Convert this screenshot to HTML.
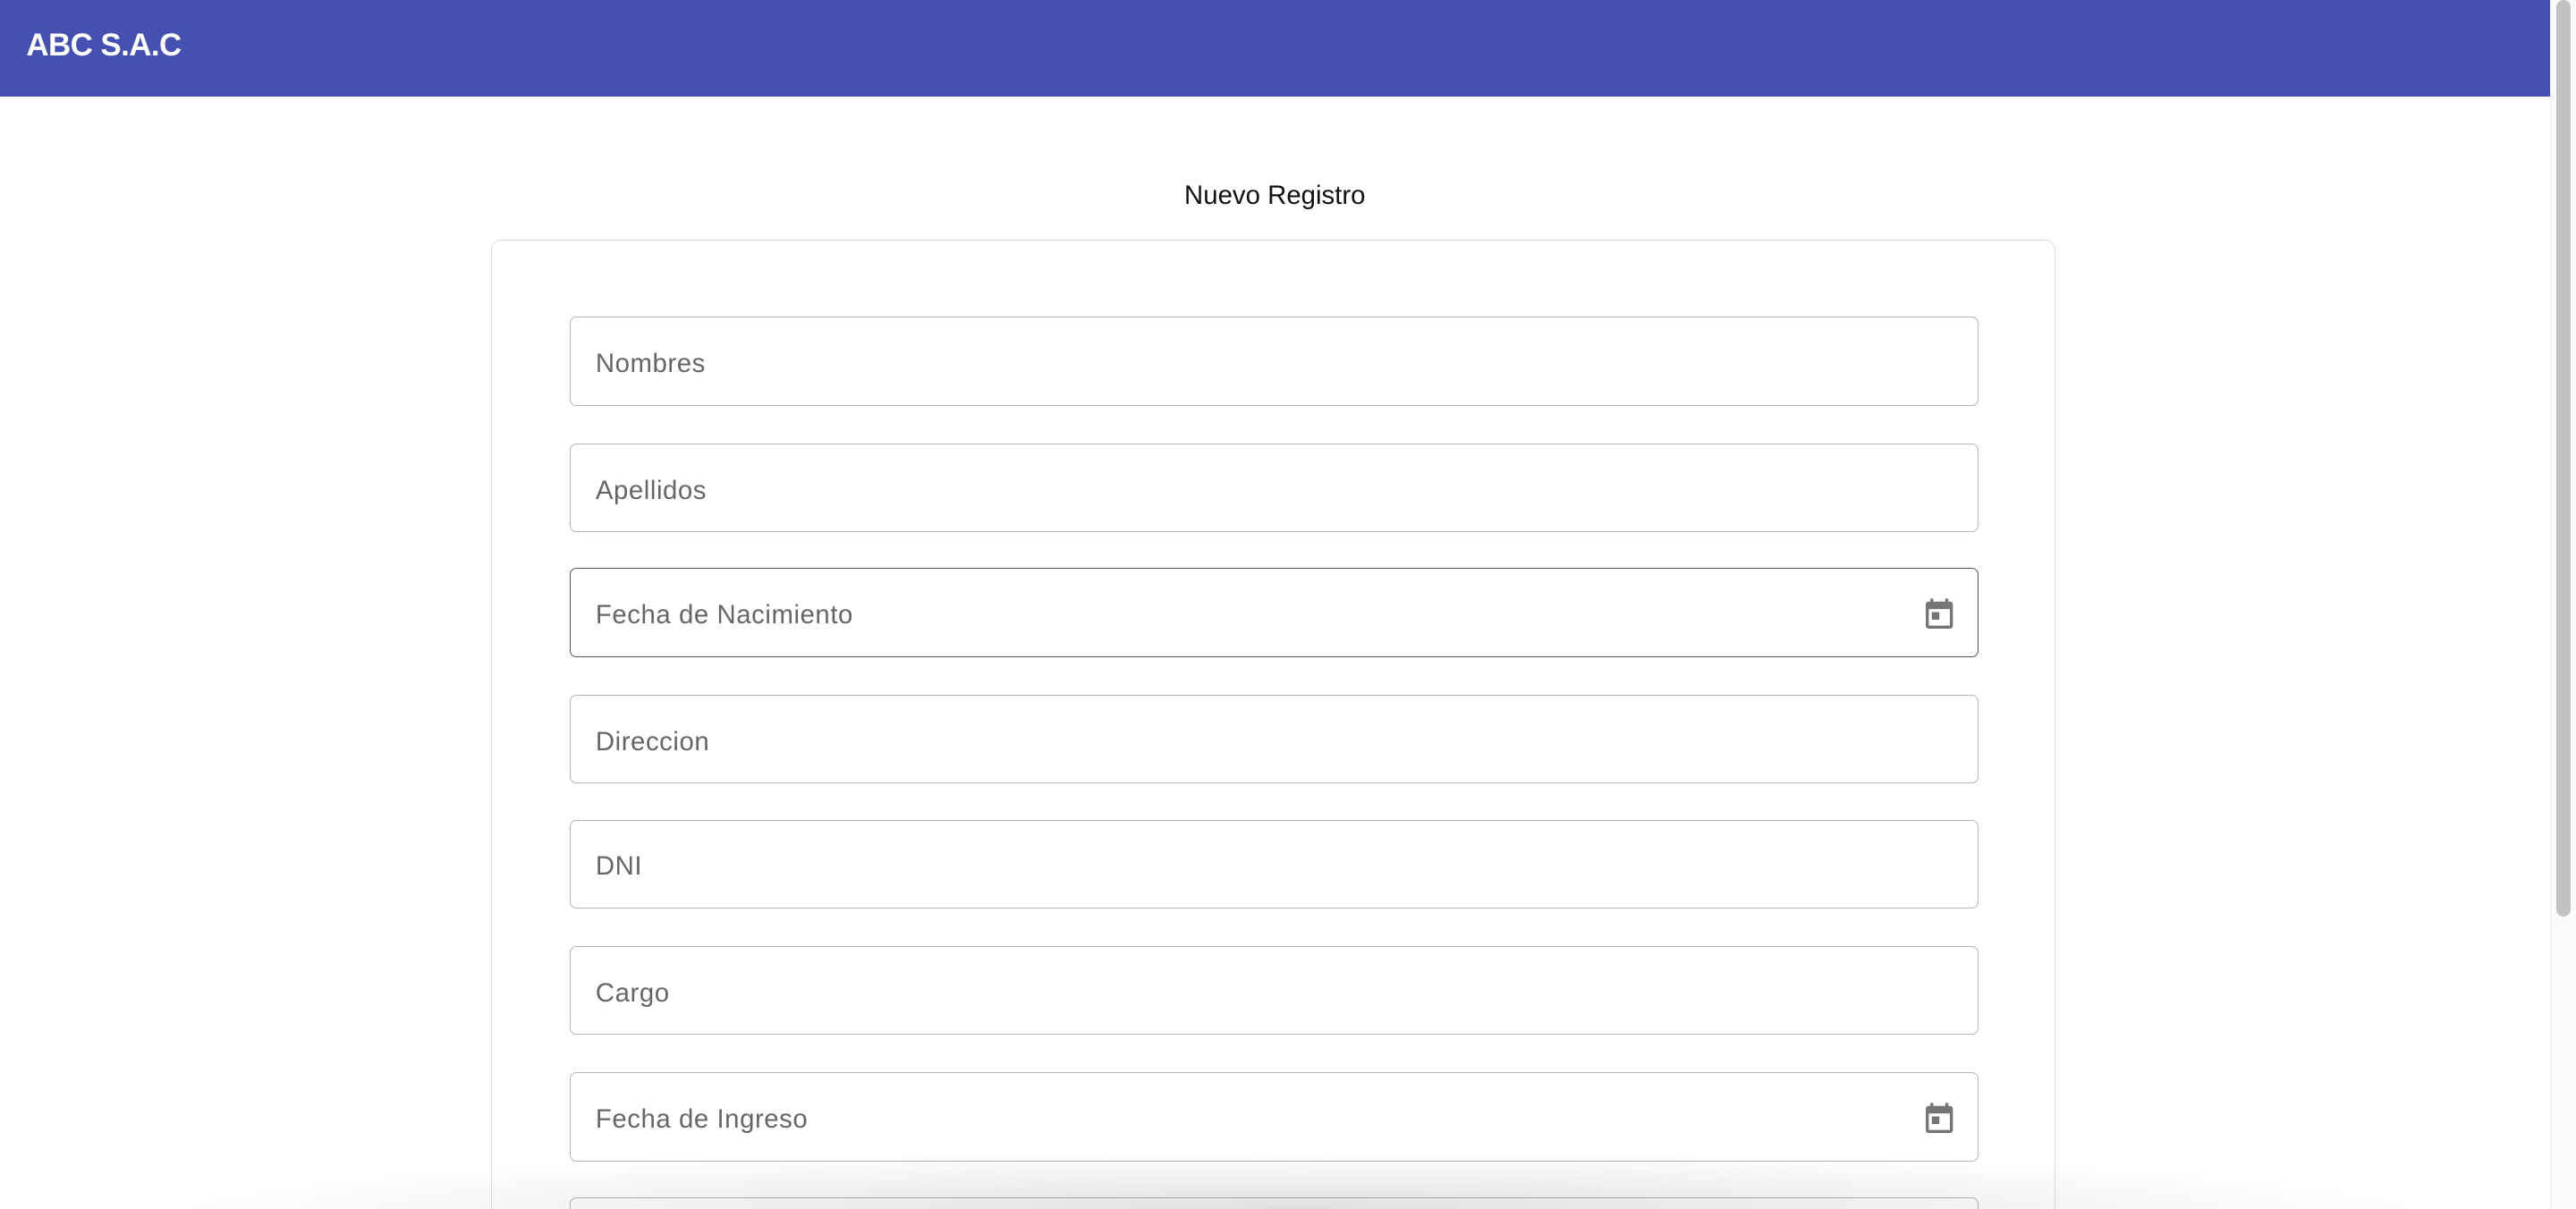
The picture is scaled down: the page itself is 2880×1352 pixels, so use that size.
<!DOCTYPE html>
<html><head><meta charset="utf-8"><style>
html,body{margin:0;padding:0;width:2880px;height:1352px;overflow:hidden;background:#fff;font-family:"Liberation Sans",Roboto,sans-serif}
#w{zoom:1.8367;width:1568px;height:736px;position:relative;overflow:hidden}
.hdr{position:absolute;left:0;top:0;width:1552px;height:59px;background:#4550b1}
.hdr span{position:absolute;left:16px;top:17px;color:#fff;font-weight:bold;font-size:19px;letter-spacing:-0.3px}
.title{position:absolute;left:0;width:1552px;top:110px;text-align:center;font-size:16px;color:#111}
.card{position:absolute;left:299px;top:146px;width:951px;height:600px;border:1px solid #dcdcdc;border-radius:6px}
.f{position:absolute;left:347px;width:856px;height:53px;border:1px solid #b5b5b5;border-radius:4px;background:#fff}
.f span{position:absolute;left:15px;top:19px;font-size:16px;color:#666;letter-spacing:0.3px}
.f svg{position:absolute;right:12px;top:16px}
.sb{position:absolute;left:1552px;top:0;width:16px;height:736px;background:#fafafa;border-left:1px solid #ececec}
.th{position:absolute;left:1556px;top:0;width:9px;height:558px;background:#c1c1c1;border-radius:5px}
.sh{position:absolute;left:100px;top:700px;width:1380px;height:36px;background:radial-gradient(ellipse 50% 100% at 50% 100%,rgba(0,0,0,.12),rgba(0,0,0,0))}
</style></head><body><div id="w">
<div class="hdr"><span>ABC S.A.C</span></div>
<div class="title">Nuevo Registro</div>
<div class="card"></div>
<div class="f" style="top:193px"><span>Nombres</span></div>
<div class="f" style="top:270px"><span>Apellidos</span></div>
<div class="f" style="top:346px;border-color:#555"><span>Fecha de Nacimiento</span><svg width="22" height="22" viewBox="0 0 24 24"><path fill="#757575" d="M19 4h-1V2h-2v2H8V2H6v2H5c-1.1 0-2 .9-2 2v14c0 1.1.9 2 2 2h14c1.1 0 2-.9 2-2V6c0-1.1-.9-2-2-2zm0 16H5V9h14v11zM7 11h5v5H7z"/></svg></div>
<div class="f" style="top:423px"><span>Direccion</span></div>
<div class="f" style="top:499px"><span>DNI</span></div>
<div class="f" style="top:576px"><span>Cargo</span></div>
<div class="f" style="top:653px"><span>Fecha de Ingreso</span><svg width="22" height="22" viewBox="0 0 24 24"><path fill="#757575" d="M19 4h-1V2h-2v2H8V2H6v2H5c-1.1 0-2 .9-2 2v14c0 1.1.9 2 2 2h14c1.1 0 2-.9 2-2V6c0-1.1-.9-2-2-2zm0 16H5V9h14v11zM7 11h5v5H7z"/></svg></div>
<div class="f" style="top:729px;height:20px"></div>
<div class="sh"></div>
<div class="sb"></div><div class="th"></div>
</div></body></html>
